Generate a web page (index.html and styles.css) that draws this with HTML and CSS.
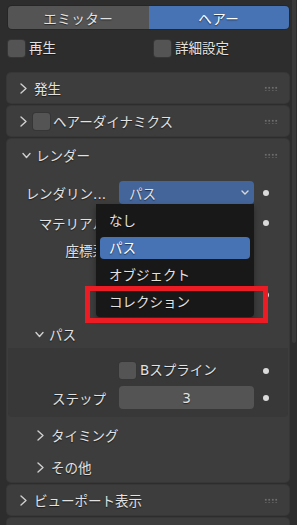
FILE: index.html
```html
<!DOCTYPE html>
<html lang="ja">
<head>
  <meta charset="UTF-8" />
  <meta name="viewport" content="width=device-width, initial-scale=1.0"/>
  <title>パーティクル設定</title>
  <link rel="stylesheet" href="styles.css">
</head>
<body>
  <div class="area">
    <div class="content">
      <div class="tabs">
        <div class="tab">エミッター</div>
        <div class="tab active">ヘアー</div>
      </div>

      <div class="toggles">
        <label class="check"><span class="box"></span>再生</label>
        <label class="check"><span class="box"></span>詳細設定</label>
      </div>

      <div class="panel">
        <div class="panel-head">
          <svg class="chev" width="7" height="11" viewBox="0 0 7 11"><path d="M1 1l5 4.5L1 10" /></svg>
          <span>発生</span>
          <span class="grip"></span>
        </div>
      </div>

      <div class="panel">
        <div class="panel-head">
          <svg class="chev" width="7" height="11" viewBox="0 0 7 11"><path d="M1 1l5 4.5L1 10" /></svg>
          <span class="box small"></span>
          <span>ヘアーダイナミクス</span>
          <span class="grip"></span>
        </div>
      </div>

      <div class="panel render">
        <div class="panel-head open">
          <svg class="chev down" width="9" height="7" viewBox="0 0 9 7"><path d="M1 1.5l3.5 4 3.5-4" /></svg>
          <span>レンダー</span>
          <span class="grip"></span>
        </div>

        <div class="row first">
          <span class="label">レンダリン...</span>
          <div class="field select">パス
            <svg class="arrow" width="8" height="5" viewBox="0 0 8 5"><path d="M1 1l3 3 3-3" /></svg>
          </div>
          <span class="dot"></span>
        </div>
        <div class="row material">
          <span class="label">マテリアル</span>
          <div class="field"></div>
          <span class="dot"></span>
        </div>
        <div class="row coord">
          <span class="label">座標系</span>
          <div class="field"></div>
          <span class="dot hidden"></span>
        </div>
        <div class="row emitter">
          <span class="label"></span>
          <div class="check"><span class="box"></span></div>
          <span class="dot"></span>
        </div>

        <div class="sub-head">
          <svg class="chev down" width="9" height="7" viewBox="0 0 9 7"><path d="M1 1.5l3.5 4 3.5-4" /></svg>
          <span>パス</span>
        </div>
        <div class="sub-body">
          <div class="row">
            <span class="label"></span>
            <label class="check"><span class="box"></span>Bスプライン</label>
            <span class="dot"></span>
          </div>
          <div class="row steps">
            <span class="label">ステップ</span>
            <div class="field number">3</div>
            <span class="dot"></span>
          </div>
        </div>

        <div class="sub-head closed timing">
          <svg class="chev" width="7" height="11" viewBox="0 0 7 11"><path d="M1 1l5 4.5L1 10" /></svg>
          <span>タイミング</span>
        </div>
        <div class="sub-head closed">
          <svg class="chev" width="7" height="11" viewBox="0 0 7 11"><path d="M1 1l5 4.5L1 10" /></svg>
          <span>その他</span>
        </div>

        <ul class="menu">
          <li>なし</li>
          <li class="active">パス</li>
          <li>オブジェクト</li>
          <li>コレクション</li>
        </ul>
        <div class="mark"></div>
      </div>

      <div class="panel">
        <div class="panel-head">
          <svg class="chev" width="7" height="11" viewBox="0 0 7 11"><path d="M1 1l5 4.5L1 10" /></svg>
          <span>ビューポート表示</span>
          <span class="grip"></span>
        </div>
      </div>

      <div class="panel">
        <div class="panel-head"></div>
      </div>
    </div>
    <div class="scrollbar"></div>
  </div>
</body>
</html>
```

FILE: styles.css
```css
body {
  margin: 0;
  background-color: #2d2d2d;
  color: #e2e2e2;
  font-family: "DejaVu Sans", "Noto Sans CJK JP", sans-serif;
  font-size: 13.5px;
  height: 525px;
  overflow: hidden;
}

.area {
  display: flex;
  align-items: flex-start;
}

.content {
  width: 282px;
  padding-left: 7px;
  text-shadow: 0 1px 1px rgba(0, 0, 0, 0.55);
}

.scrollbar {
  width: 4px;
  height: 343px;
  margin-left: 3px;
  background-color: #3a3a3a;
  border-radius: 0 0 2px 2px;
}

/* top tabs */
.tabs {
  display: flex;
  height: 23px;
  margin: 6px 0 0 1px;
  border-radius: 4px;
  overflow: hidden;
  box-shadow: 0 0 0 1px #262626;
}

.tab {
  flex: 1;
  display: flex;
  align-items: center;
  justify-content: center;
  background-color: #545454;
  letter-spacing: 0.5px;
}

.tab.active {
  background-color: #4772b3;
  color: #ffffff;
}

.toggles {
  display: grid;
  grid-template-columns: 146px 1fr;
  margin: 11px 0 0 1px;
  height: 17px;
}

.check {
  display: flex;
  align-items: center;
  gap: 4px;
  line-height: 17px;
}

.box {
  width: 17px;
  height: 17px;
  flex: none;
  background-color: #545454;
  border-radius: 3px;
  box-shadow: 0 0 0 1px #363636;
}

/* panels */
.panel {
  background-color: #3d3d3d;
  border-radius: 4px;
  box-shadow: 0 0 0 1px #373737;
  margin-top: 3px;
}

.toggles + .panel {
  margin-top: 16px;
}

.panel-head {
  display: flex;
  align-items: center;
  height: 30px;
  padding-left: 13px;
}

.panel-head.open {
  height: 32px;
  padding-left: 15px;
}

.chev {
  flex: none;
  fill: none;
  stroke: #cfcfcf;
  stroke-width: 1.4;
  stroke-linecap: round;
  stroke-linejoin: round;
  margin-right: 7px;
}

.chev.down {
  margin-right: 5px;
}

.box.small {
  margin: 0 3px 0 -1px;
}

.grip {
  margin-left: auto;
  margin-right: 11px;
  width: 14px;
  height: 5px;
  background-image: radial-gradient(circle, #6e6e6e 0.9px, transparent 1.1px);
  background-size: 3.5px 3.5px;
}

/* render panel */
.render {
  position: relative;
}

.row {
  display: flex;
  align-items: center;
  height: 23px;
}

.row.first { margin-top: 10px; }
.row.material { margin-top: 7px; }
.row.coord { margin-top: 4px; }
.row.emitter { margin-top: 22px; }
.row.steps { margin-top: 4px; }

.label {
  width: 105px;
  flex: none;
  box-sizing: border-box;
  padding-right: 6px;
  margin-right: 7px;
  text-align: right;
  white-space: nowrap;
  overflow: hidden;
}

.field {
  width: 135px;
  height: 23px;
  flex: none;
  box-sizing: border-box;
  display: flex;
  align-items: center;
  padding-left: 10px;
  background-color: #545454;
  border-radius: 4px;
}

.field.select {
  background-color: #44659a;
  position: relative;
}

.field .arrow {
  position: absolute;
  right: 5px;
  top: 9px;
  fill: none;
  stroke: #d8d8d8;
  stroke-width: 1.4;
  stroke-linecap: round;
}

.field.number {
  justify-content: center;
  padding-left: 0;
}

.row .check {
  width: 135px;
  flex: none;
}

.dot {
  width: 6px;
  height: 6px;
  margin-left: 9px;
  border-radius: 50%;
  background-color: #dadada;
}

.dot.hidden {
  visibility: hidden;
}

.sub-head {
  display: flex;
  align-items: center;
  height: 28px;
  margin-top: 14px;
  padding-left: 28px;
}

.sub-head.closed {
  height: 30px;
  margin-top: 2px;
  padding-left: 30px;
}

.sub-head.timing {
  margin-top: 3px;
}

.sub-body {
  background-color: #383838;
  border-radius: 0 0 4px 4px;
  margin: 0 1px;
  padding: 11px 0 8px;
}

.sub-body .row {
  margin-left: -1px;
}

/* open dropdown */
.menu {
  position: absolute;
  left: 89px;
  top: 65px;
  width: 158px;
  margin: 0;
  padding: 6px 4px 4px;
  box-sizing: border-box;
  list-style: none;
  background-color: #181818;
  border-radius: 0 0 4px 4px;
  box-shadow: 0 3px 6px rgba(0, 0, 0, 0.35);
}

.menu li {
  height: 22px;
  line-height: 22px;
  padding-left: 9px;
  margin-bottom: 5px;
  border-radius: 4px;
}

.menu li:last-child {
  margin-bottom: 0;
}

.menu li.active {
  background-color: #4772b3;
  color: #ffffff;
}

.mark {
  position: absolute;
  left: 78px;
  top: 147px;
  width: 183px;
  height: 37px;
  box-sizing: border-box;
  border: 5px solid #ec1c24;
}
```
